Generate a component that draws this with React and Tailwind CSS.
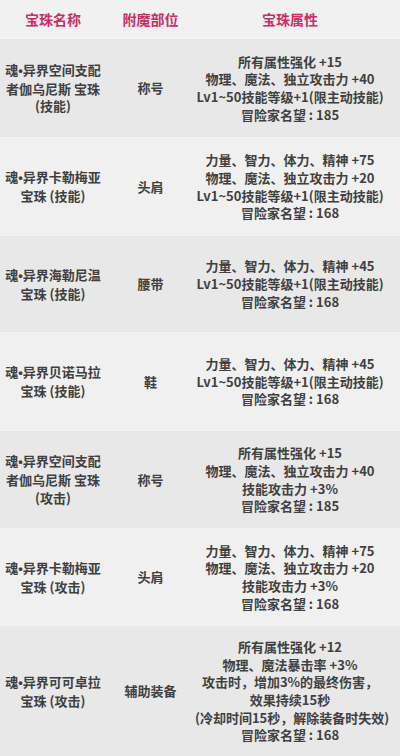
export default function App() {
  const rows = [
    {
      h: "h-[99px]",
      bg: "bg-[#e8e8e8]",
      name: ["异界空间支配", "者伽乌尼斯 宝珠", "(技能)"],
      part: "称号",
      attrs: ["所有属性强化 +15", "物理、魔法、独立攻击力 +40", "Lv1~50技能等级+1(限主动技能)", "冒险家名望 : 185"],
    },
    {
      h: "h-[98px]",
      bg: "bg-[#f0f0f0]",
      name: ["异界卡勒梅亚", "宝珠 (技能)"],
      part: "头肩",
      attrs: ["力量、智力、体力、精神 +75", "物理、魔法、独立攻击力 +20", "Lv1~50技能等级+1(限主动技能)", "冒险家名望 : 168"],
    },
    {
      h: "h-[97px]",
      bg: "bg-[#e8e8e8]",
      name: ["异界海勒尼温", "宝珠 (技能)"],
      part: "腰带",
      attrs: ["力量、智力、体力、精神 +45", "Lv1~50技能等级+1(限主动技能)", "冒险家名望 : 168"],
    },
    {
      h: "h-[98px]",
      bg: "bg-[#f0f0f0]",
      name: ["异界贝诺马拉", "宝珠 (技能)"],
      part: "鞋",
      attrs: ["力量、智力、体力、精神 +45", "Lv1~50技能等级+1(限主动技能)", "冒险家名望 : 168"],
    },
    {
      h: "h-[98px]",
      bg: "bg-[#e8e8e8]",
      name: ["异界空间支配", "者伽乌尼斯 宝珠", "(攻击)"],
      part: "称号",
      attrs: ["所有属性强化 +15", "物理、魔法、独立攻击力 +40", "技能攻击力 +3%", "冒险家名望 : 185"],
    },
    {
      h: "h-[97px]",
      bg: "bg-[#f0f0f0]",
      name: ["异界卡勒梅亚", "宝珠 (攻击)"],
      part: "头肩",
      attrs: ["力量、智力、体力、精神 +75", "物理、魔法、独立攻击力 +20", "技能攻击力 +3%", "冒险家名望 : 168"],
    },
    {
      h: "h-[131px]",
      bg: "bg-[#e8e8e8]",
      name: ["异界可可卓拉", "宝珠 (攻击)"],
      part: "辅助装备",
      attrs: [
        "所有属性强化 +12",
        "物理、魔法暴击率 +3%",
        "攻击时，增加3%的最终伤害，",
        "效果持续15秒",
        "(冷却时间15秒，解除装备时失效)",
        "冒险家名望 : 168",
      ],
    },
  ];

  return (
    <div className="w-[400px] h-[756px] overflow-hidden bg-[#e8e8e8] font-['Noto_Sans_CJK_SC',_'Noto_Sans',_sans-serif]">
      <div className="grid grid-cols-[106px_89px_190px_15px] h-[38px] bg-[#f1f1f1] text-[14px] font-semibold text-[#c92d63] items-center">
        <div className="text-center">宝珠名称</div>
        <div className="text-center">附魔部位</div>
        <div className="text-center">宝珠属性</div>
        <div></div>
      </div>
      {rows.map((r, i) => (
        <div
          key={i}
          className={`grid grid-cols-[106px_89px_190px_15px] items-center ${r.h} ${r.bg} text-[13px] leading-[17.7px] font-semibold text-[#404040] border-t border-[#f3f3f3]`}
        >
          <div className="text-center whitespace-nowrap">
            {r.name.map((l, j) => (
              <div key={j}>
                {j === 0 ? (
                  <>
                    魂<span className="font-['Liberation_Sans',_sans-serif]">•</span>
                    {l}
                  </>
                ) : (
                  l
                )}
              </div>
            ))}
          </div>
          <div className="text-center">{r.part}</div>
          <div className="text-center whitespace-nowrap">
            {r.attrs.map((l, j) => (
              <div key={j}>{l}</div>
            ))}
          </div>
          <div></div>
        </div>
      ))}
    </div>
  );
}
